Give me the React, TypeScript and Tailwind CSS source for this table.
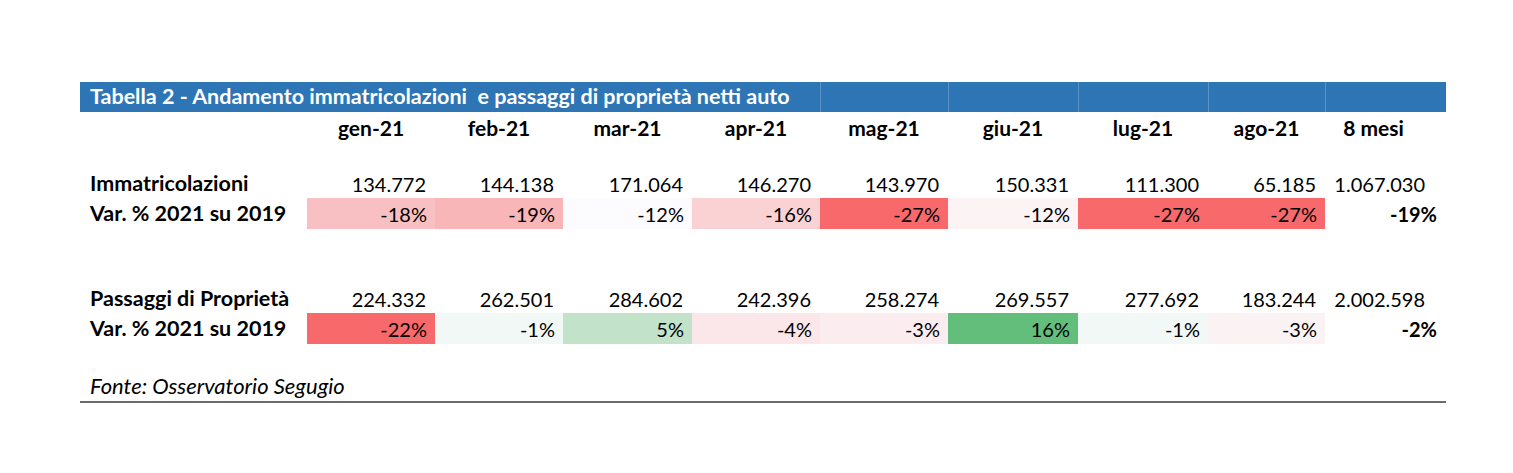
const cols = 'grid grid-cols-[227px_128px_128px_129px_128px_128px_130px_130px_117px_121px]'

const months = ['gen-21', 'feb-21', 'mar-21', 'apr-21', 'mag-21', 'giu-21', 'lug-21', 'ago-21']

type Cell = { v: string; bg: string }

const imm = ['134.772', '144.138', '171.064', '146.270', '143.970', '150.331', '111.300', '65.185']
const immVar: Cell[] = [
  { v: '-18%', bg: 'bg-[#f9c0c3]' },
  { v: '-19%', bg: 'bg-[#f8b6b8]' },
  { v: '-12%', bg: 'bg-[#fcfbfe]' },
  { v: '-16%', bg: 'bg-[#fad2d4]' },
  { v: '-27%', bg: 'bg-[#f8696b]' },
  { v: '-12%', bg: 'bg-[#fcf3f5]' },
  { v: '-27%', bg: 'bg-[#f8696b]' },
  { v: '-27%', bg: 'bg-[#f8696b]' },
]

const pass = ['224.332', '262.501', '284.602', '242.396', '258.274', '269.557', '277.692', '183.244']
const passVar: Cell[] = [
  { v: '-22%', bg: 'bg-[#f8696b]' },
  { v: '-1%', bg: 'bg-[#f2f8f5]' },
  { v: '5%', bg: 'bg-[#c2e3ca]' },
  { v: '-4%', bg: 'bg-[#fbe7e9]' },
  { v: '-3%', bg: 'bg-[#fbedef]' },
  { v: '16%', bg: 'bg-[#63be7b]' },
  { v: '-1%', bg: 'bg-[#f2f8f5]' },
  { v: '-3%', bg: 'bg-[#fbf2f4]' },
]

function NumRow({ label, values, total }: { label: string; values: string[]; total: string }) {
  return (
    <div className={`${cols} h-[28px] items-center`}>
      <div className="pl-[10px] text-[21.5px] font-bold">{label}</div>
      {values.map((v, i) => (
        <div key={i} className="pr-[9px] text-right">{v}</div>
      ))}
      <div className="pr-[21px] text-right">{total}</div>
    </div>
  )
}

function VarRow({ cells, total }: { cells: Cell[]; total: string }) {
  return (
    <div className={`${cols} h-[31px]`}>
      <div className="flex items-center pl-[10px] text-[21.5px] font-bold">Var. % 2021 su 2019</div>
      {cells.map((c, i) => (
        <div key={i} className={`flex items-center justify-end pr-[8px] ${c.bg}`}>{c.v}</div>
      ))}
      <div className="flex items-center justify-end pr-[9px] font-bold">{total}</div>
    </div>
  )
}

export default function App() {
  return (
    <div className="min-h-[473px] w-[1513px] bg-white pt-[82px] pl-[80px] font-['Lato',sans-serif] text-[20px] leading-none text-black">
      <div className="w-[1366px]">
        {/* barra titolo */}
        <div className={`${cols} h-[30px] bg-[#2e75b6] text-white`}>
          <div className="col-span-5 flex items-end whitespace-pre pb-[5px] pl-[10px] text-[21.5px] font-bold">
            Tabella 2 - Andamento immatricolazioni  e passaggi di proprietà netti auto
          </div>
          <div className="border-l border-[#5b93c8]" />
          <div className="border-l border-[#5b93c8]" />
          <div className="border-l border-[#5b93c8]" />
          <div className="border-l border-[#5b93c8]" />
          <div className="border-l border-[#5b93c8]" />
        </div>

        <div className={`${cols} h-[31px] items-center text-[21px] font-bold`}>
          <div />
          {months.map((m) => (
            <div key={m} className="text-center">{m}</div>
          ))}
          <div className="pr-[24px] text-center">8 mesi</div>
        </div>

        <div className="h-[27px]" />
        <NumRow label="Immatricolazioni" values={imm} total="1.067.030" />
        <VarRow cells={immVar} total="-19%" />

        <div className="h-[56px]" />
        <NumRow label="Passaggi di Proprietà" values={pass} total="2.002.598" />
        <VarRow cells={passVar} total="-2%" />

        <div className="h-[27px]" />
        <div className="flex h-[32px] items-center border-b-2 border-[#6b6b6b] pl-[10px] text-[22px] italic">
          Fonte: Osservatorio Segugio
        </div>
      </div>
    </div>
  )
}
